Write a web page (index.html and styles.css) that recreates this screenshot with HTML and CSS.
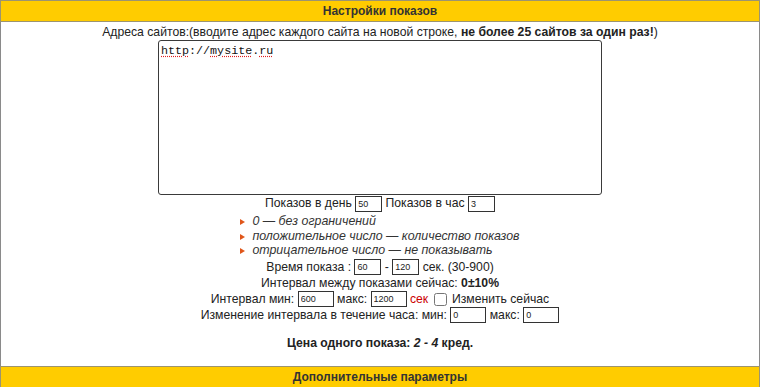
FILE: index.html
```html
<!DOCTYPE html>
<html lang="ru">
<head>
    <meta charset="UTF-8">
    <title>Настройки показов</title>
    <link rel="stylesheet" href="styles.css">
</head>
<body>
    <div class="panel">
        <div class="bar">Настройки показов</div>
        <div class="content">
            <div class="line">Адреса сайтов:(вводите адрес каждого сайта на новой строке, <b>не более 25 сайтов за один раз!</b>)</div>
            <div class="sites"><span class="typo">http</span>://<span class="typo">mysite</span>.<span class="typo">ru</span></div>
            <div class="line">Показов в день <input class="num" type="text" value="50"> Показов в час <input class="num" type="text" value="3"></div>
            <ul class="hints">
                <li>0 — без ограничений</li>
                <li>положительное число — количество показов</li>
                <li>отрицательное число — не показывать</li>
            </ul>
            <div class="line time">Время показа : <input class="num" type="text" value="60"> - <input class="num" type="text" value="120"> сек. (30-900)</div>
            <div class="line">Интервал между показами сейчас: <b>0±10%</b></div>
            <div class="line">Интервал мин: <input class="num wide" type="text" value="600"> макс: <input class="num wide" type="text" value="1200"> <span class="unit">сек</span> <input class="check" type="checkbox"> Изменить сейчас</div>
            <div class="line">Изменение интервала в течение часа: мин: <input class="num wide" type="text" value="0"> макс: <input class="num wide" type="text" value="0"></div>
            <div class="line price"><b>Цена одного показа: <i>2 - 4</i> кред.</b></div>
        </div>
        <div class="bar">Дополнительные параметры</div>
    </div>
</body>
</html>
```

FILE: styles.css
```css
* {
    box-sizing: border-box;
}

body {
    margin: 0;
    font-family: "Liberation Sans", Arial, sans-serif;
    font-size: 12.2px;
    color: #222;
    background: #fff;
}

.panel {
    width: 760px;
}

.bar {
    height: 22px;
    line-height: 20px;
    background-color: #ffcc00;
    border: 1px solid #9c9470;
    text-align: center;
    font-weight: bold;
    font-size: 12px;
    color: #333;
}

.content {
    border-left: 1px solid #8a8a8a;
    border-right: 1px solid #8a8a8a;
    text-align: center;
    padding: 2px 0 15px;
}

.line {
    line-height: 16px;
    height: 16px;
}

.sites {
    width: 444px;
    height: 155px;
    margin: 0 auto;
    border: 1px solid #3a3a3a;
    border-radius: 3px;
    padding: 3px 2px;
    text-align: left;
    font-family: "Liberation Mono", "DejaVu Sans Mono", monospace;
    font-size: 11.7px;
    line-height: 14px;
    color: #111;
}

.typo {
    text-decoration: underline dotted #e02020;
    text-underline-offset: 2px;
}

.num {
    width: 27px;
    height: 16px;
    margin: 0;
    padding: 0 2px;
    border: 1px solid #333;
    font-family: "Liberation Sans", Arial, sans-serif;
    font-size: 9px;
    color: #222;
    vertical-align: middle;
    outline: none;
}

.num.wide {
    width: 36px;
}

.hints {
    display: inline-block;
    margin: 3px 0 0;
    padding: 0 0 0 12px;
    list-style: none;
    text-align: left;
    font-style: italic;
    font-size: 12.4px;
    color: #333;
}

.hints li {
    position: relative;
    line-height: 14.5px;
}

.hints li::before {
    content: "";
    position: absolute;
    left: -12px;
    top: 5px;
    border-left: 5px solid #e0561a;
    border-top: 3px solid transparent;
    border-bottom: 3px solid transparent;
}

.time {
    margin-top: 1px;
}

.unit {
    color: #cc0000;
}

.check {
    width: 13px;
    height: 13px;
    margin: 0 2px;
    vertical-align: middle;
}

.price {
    margin-top: 12px;
}
```
